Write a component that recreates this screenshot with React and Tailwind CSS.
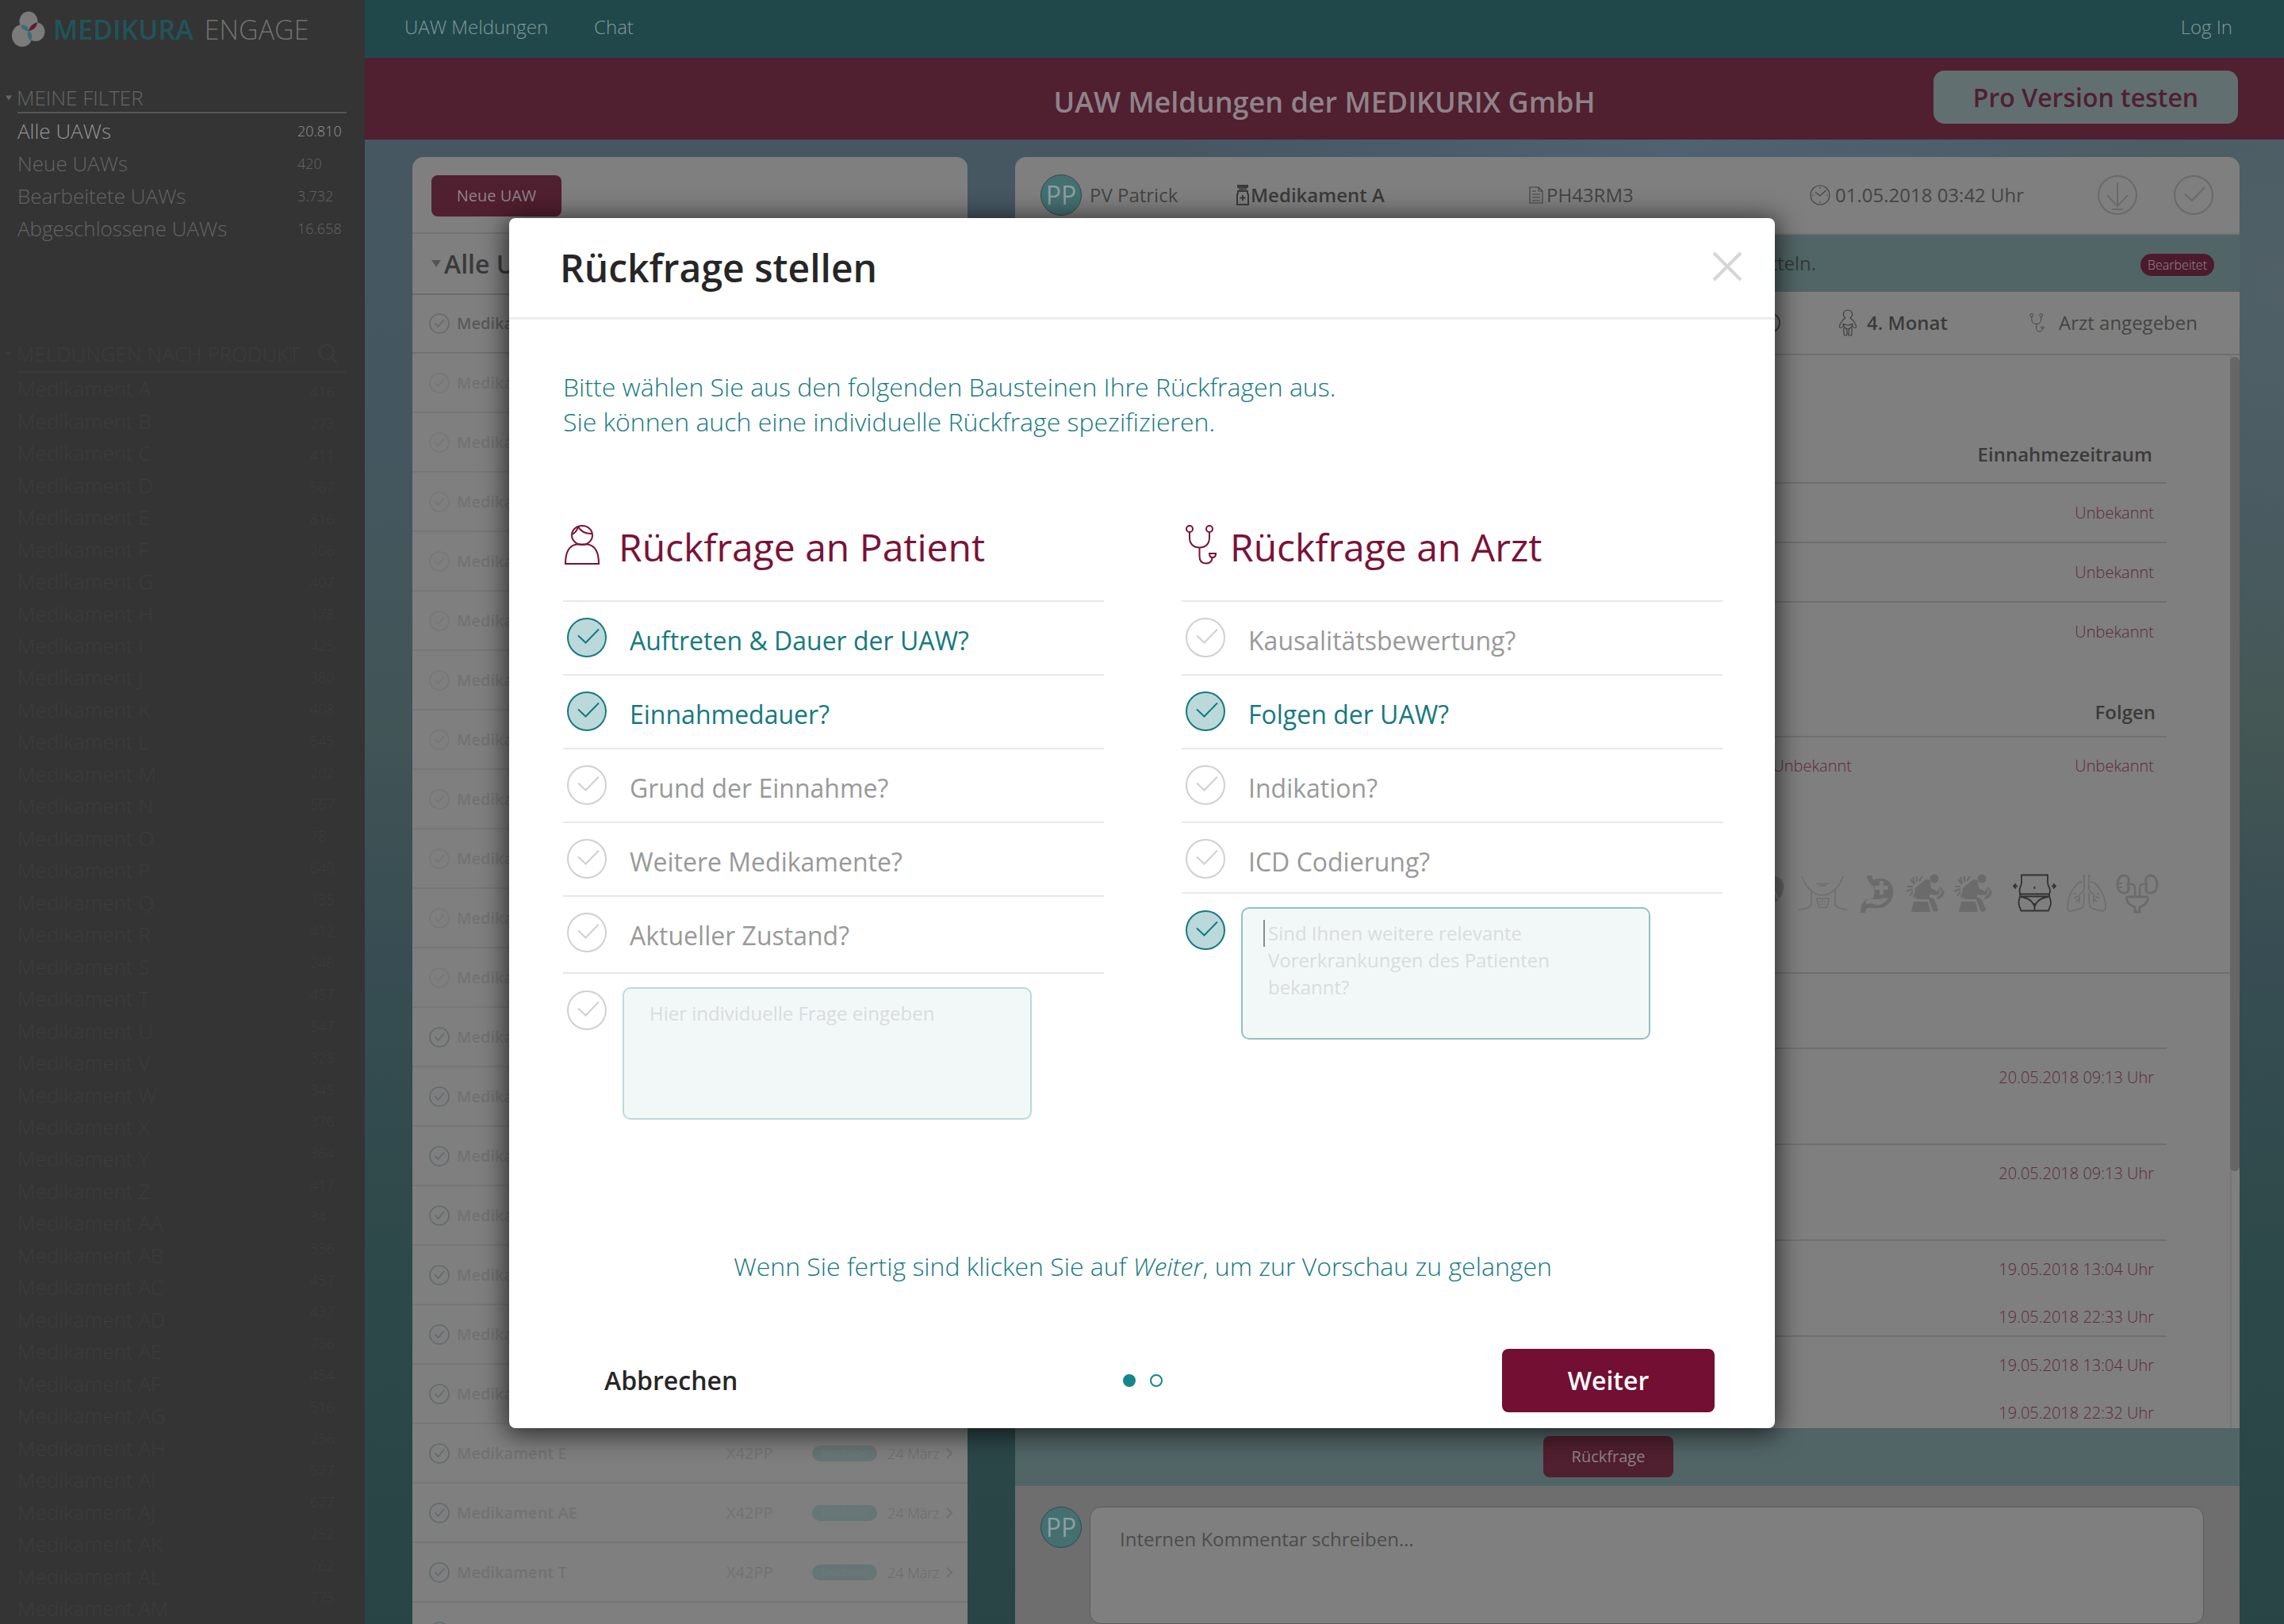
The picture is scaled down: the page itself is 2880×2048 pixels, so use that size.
import React from "react";

const filters = [
  ["Alle UAWs", "20.810", true],
  ["Neue UAWs", "420"],
  ["Bearbeitete UAWs", "3.732"],
  ["Abgeschlossene UAWs", "16.658"],
];

const products = [
  ..."ABCDEFGHIJKLMNOPQRSTUVWXYZ".split(""),
  ..."ABCDEFGHIJKLM".split("").map((c) => "A" + c),
];

const productCounts = [
  416, 273, 411, 567, 816, 206, 407, 178, 425, 380, 408, 545, 202, 567, 78, 640, 135, 412, 246, 457,
  547, 328, 345, 376, 364, 417, 34, 336, 457, 437, 756, 454, 516, 256, 577, 677, 252, 762, 775, 675,
];

const reports = [
  "A", "B", "C", "D", "F", "G", "H", "I", "J", "K", "L", "M",
  "N", "O", "P", "Q", "R", "S", "E", "AE", "T", "AF",
].map((name, i) => ({ name, done: i > 10 }));

const timeline = [
  ["20.05.2018 09:13 Uhr"],
  ["20.05.2018 09:13 Uhr"],
  ["19.05.2018 13:04 Uhr", "19.05.2018 22:33 Uhr"],
  ["19.05.2018 13:04 Uhr", "19.05.2018 22:32 Uhr"],
];

const CheckMark = ({ className }) => (
  <svg viewBox="0 0 50 50" fill="none" stroke="currentColor" strokeWidth="2" className={className} aria-hidden="true">
    <path d="M14 22.5 23.5 31.5 40 14.5" />
  </svg>
);

const CheckCircle = ({ className }) => (
  <svg viewBox="0 0 26 26" fill="none" stroke="currentColor" strokeWidth="1.6" className={className} aria-hidden="true">
    <circle cx="13" cy="13" r="12" />
    <path d="M7.500 12.500 11.500 17 19 8" />
  </svg>
);

const Triangle = ({ className }) => (
  <svg viewBox="0 0 12 9" fill="currentColor" className={className} aria-hidden="true">
    <path d="M0 0h12L6 9z" />
  </svg>
);

const Logo = () => (
  <svg viewBox="0 0 44 46" className="h-[46px] w-11" aria-hidden="true">
    <ellipse cx="23" cy="13" rx="11.500" ry="12.500" fill="#7b7b7b" />
    <ellipse cx="32" cy="26" rx="11.500" ry="12" fill="#7b7b7b" />
    <ellipse cx="15" cy="31" rx="13" ry="14" fill="#7b7b7b" />
    <path d="M23 25c1-4 4-9 11-11 0 5-4 10-11 11z" fill="#5d1b36" />
    <path d="M13 18c4-2 10 1 10 7-5 0-9-3-10-7z" fill="#3c6d70" />
    <path d="M22 24c6 3 6 8 4 14-4-3-5-9-4-14z" fill="#3c6d70" />
  </svg>
);

const Stethoscope = ({ className }) => (
  <svg viewBox="0 0 40 50" fill="none" stroke="currentColor" strokeWidth="2" className={className} aria-hidden="true">
    <circle cx="6" cy="5" r="4" />
    <circle cx="31" cy="5" r="4" />
    <path d="M6 9v7c0 8 5 12.500 12.500 12.500S31 24 31 16V9" />
    <path d="M18.500 28.500V39c0 6 3 9.500 8 9.500s8-3 8-8" />
    <path d="M31 36h8c0 3-1.500 5-4 5s-4-2-4-5z" />
  </svg>
);

const Patient = ({ className }) => (
  <svg viewBox="0 0 44 50" fill="none" stroke="currentColor" strokeWidth="2" className={className} aria-hidden="true">
    <ellipse cx="22" cy="13" rx="13" ry="12" />
    <path d="M1 49c0-14 4-23 14-24.500h14C39 26 43 35 43 49z" />
    <path d="M17 2c-1 4-3 8-8 10M17 2c3 6 9 9 17 9" />
  </svg>
);

const MedicineBottle = () => (
  <svg viewBox="0 0 16 26" className="h-[26px] w-4" aria-hidden="true">
    <path d="M1 0h14v4H1z" fill="#3a3a3a" />
    <path d="M3 5.500h10M2 8h12v3l1 1v13H1V12l1-1z" fill="none" stroke="#3a3a3a" strokeWidth="2" />
    <path d="M8 13v7M4.500 16.500h7" stroke="#3a3a3a" strokeWidth="2" />
  </svg>
);

const Document = () => (
  <svg viewBox="0 0 18 22" fill="none" stroke="currentColor" strokeWidth="1.200" className="h-[22px] w-[18px] text-[#444]" aria-hidden="true">
    <path d="M1 1h11l5 5v15H1zM12 1v5h5M4 6h5M4 10h10M4 14h10M4 18h10" />
  </svg>
);

const Clock = () => (
  <svg viewBox="0 0 26 26" fill="none" stroke="currentColor" strokeWidth="1.200" className="size-[26px] text-[#444]" aria-hidden="true">
    <circle cx="13" cy="13" r="12" />
    <path d="M7 9.500 13 14l7.500-7M13 3v2M13 21v2M3 13h2M21 13h2" />
  </svg>
);

const Baby = () => (
  <svg viewBox="0 0 24 34" fill="none" stroke="currentColor" strokeWidth="1.200" className="h-[34px] w-6 text-[#3f3f3f]" aria-hidden="true">
    <path d="M9 11C4 7 7 1 12 1s8 6 3 10" />
    <path d="M9 11C6 13 1.500 18 1.500 22c0 2 3 2 4 0l2-3M15 11c3 2 7.500 7 7.500 11 0 2-3 2-4 0l-2-3" />
    <path d="M6 18.500q6 3 12 0c0 3-4 6.500-6 6.500s-6-3.500-6-6.500z" />
    <path d="M7.500 23c-2 4 0 6 0 10h3c1-3 1-6-1-9M16.500 23c2 4 0 6 0 10h-3c-1-3-1-6 1-9" />
  </svg>
);

const Neck = () => (
  <svg viewBox="0 0 66 52" fill="none" stroke="#6e6e6e" strokeWidth="1.600" className="h-[52px] w-[66px]" aria-hidden="true">
    <path d="M6 4c4 13 15 24 26 24S54 17 58 4" />
    <path d="M18 21v17c0 5-6 7-16 8.500M48 21v17c0 5 6 7 15.500 8.500M24 13.500h6l2 .8 2-.8h6M28 16h8" />
    <path d="M25 32h5l2 1 2-1h6c0 4-1 8-3 11.500H28C26 40 25 36 25 32z" />
    <path d="M29 35v6M32 35v6M35 35v6" strokeDasharray="2 1.500" />
  </svg>
);

const Stomach = () => (
  <svg viewBox="0 0 46 52" className="h-[52px] w-[46px]" aria-hidden="true">
    <path d="M13 3c0 7 6 8 6 13" fill="none" stroke="#6b6b6b" strokeWidth="6" />
    <path d="M16 11C21 5 34 5 40 13c5 8 4 20-3 26-5 5-13 6-19 5-7-1-10 0-10 6H2c0-9 3-14 8-17 6 0 8-1 9-5 1-6 0-10-3-17z" fill="#6b6b6b" />
    <path d="M10 34c5-2 9-1 14-1s9-3 13-1c-5 7-11 9-16 8-4-2-8-2-11-1-2 0-2-3 0-5z" fill="#7f7f7f" />
    <path d="M28.500 10v17M20 18.500h17" stroke="#7f7f7f" strokeWidth="5" />
  </svg>
);

const BackPain = () => (
  <svg viewBox="0 0 52 52" className="h-[52px] w-[52px]" fill="#6b6b6b" aria-hidden="true">
    <circle cx="37" cy="7" r="5.500" />
    <path d="M13 19 25 9c3-2 7-1 7 2l1 8 8 4c3 1 2 5-1 5l-9-1v4c4 0 6 2 7 5l4 10c0 3-6 4-7 1l-5-14H18c-4 0-6-2-6-5z" />
    <path d="M11 36h18l3 13H8z" />
    <path d="M12 14 7 8M12 13l-2-8M15 11V4M18 10l4-6M10 17H3M10 20l-8 3M10 23l-4 6M12 26l-1 5" stroke="#6b6b6b" strokeWidth="2" fill="none" />
    <path d="M44 18c4 3 4 9-2 12M42 20c2 3 2 5-1 7M40 32c6 0 9-5 9-10" stroke="#6b6b6b" strokeWidth="1.800" fill="none" />
  </svg>
);

const Waist = () => (
  <svg viewBox="0 0 56 52" fill="none" stroke="#323232" strokeWidth="1.800" className="h-[52px] w-14" aria-hidden="true">
    <path d="M11 2.500h33v9c0 5 3 7 3 11 0 2-1 3-1 5 0 3 2 6 2 10s-2 7-3 10H10.500C9 44 7.500 41 7.500 37s2-7 2-10c0-2-1-3-1-5 0-4 2.500-6 2.500-10z" />
    <path d="M8 26.500h39M9 29.500h37M9.500 30c9 1 16 5 18 13 2-8 9-12 18-13M27.500 38v9.500" />
    <path d="M27.500 17v3" />
    <path d="M6 16.500H1M4 13.500l-3 3 3 3M49 16.500h5M51 13.500l3 3-3 3" />
  </svg>
);

const Lungs = () => (
  <svg viewBox="0 0 50 52" fill="none" stroke="#6c6c6c" strokeWidth="1.500" className="h-[52px] w-[50px]" aria-hidden="true">
    <path d="M22 2v17c0 4-3 6-6 8M28 2v17c0 4 3 6 6 8M20 3l3 2M30 3l-3 2" />
    <path d="M20 11C12 11 1 27 1 43c0 3 1 5 4 5 6-2 13-2 15-5 2-2 2-12 2-18M30 11c8 0 19 16 19 32 0 3-1 5-4 5-6-2-13-2-15-5-2-2-2-12-2-18" />
    <path d="M16 27c-1 4 1 6 0 11M14 29l-5 3M16 32l-4 4M34 27c1 4-1 6 0 11M36 29l5 3M34 32l4 4M12 26h-3M38 26h3" />
  </svg>
);

const Kidneys = () => (
  <svg viewBox="0 0 54 52" fill="none" stroke="#6b6b6b" strokeWidth="3" className="h-[52px] w-[54px]" aria-hidden="true">
    <path d="M10 3c5 0 7 4 6 8-1 3-1 5 0 8 1 4-3 7-7 6C4 24 2 19 2 14S5 3 10 3zM44 3c-5 0-7 4-6 8 1 3 1 5 0 8-1 4 3 7 7 6 5-1 7-6 7-11S49 3 44 3z" />
    <path d="M17 14h3c3 0 4 2 4 5v11M37 14h-3c-3 0-4 2-4 5v11" strokeWidth="2.500" />
    <path d="M15 30h24c2 0 2 3 0 6-2 4-6 6-9 7v6h-6v-6c-3-1-7-3-9-7-2-3-2-6 0-6z" />
    <path d="M3 13h5M3 18h5" strokeWidth="2" />
  </svg>
);

const HeadIcon = () => (
  <svg viewBox="0 0 40 52" className="h-[52px] w-10" aria-hidden="true">
    <path d="M6 4h20c9 0 14 7 13 15-1 9-7 17-14 20H6z" fill="#666" />
    <path d="M24 33l4-9 4 9" fill="none" stroke="#7f7f7f" strokeWidth="2" />
  </svg>
);

function Sidebar() {
  return (
    <aside className="flex h-full w-[460px] shrink-0 flex-col bg-[#343434] pl-[22px] pr-[23px]">
      <div className="-ml-[9px] flex h-[78px] items-center gap-[10px] pb-1">
        <Logo />
        <div className="flex gap-[14px] text-[34px] leading-[44px]">
          <span className="font-semibold text-[#20545a]">MEDIKURA</span>
          <span className="font-light text-[#717171]">ENGAGE</span>
        </div>
      </div>
      <section className="mt-[27px]">
        <h2 className="-ml-[15px] flex h-9 items-center gap-[6px] text-[26px] font-light text-[#666]">
          <Triangle className="h-[7px] w-2" />
          MEINE FILTER
        </h2>
        <div className="h-[2px] bg-[#575757]" />
        <ul className="pt-[2px]">
          {filters.map(([name, count, active]) => (
            <li key={name}>
              <a
                href="#"
                className={`flex h-[41px] items-center justify-between text-[26px] font-light ${active ? "text-[#949494]" : "text-[#646464]"}`}
              >
                <span>{name}</span>
                <span className="w-[62px] text-[18px]">{count}</span>
              </a>
            </li>
          ))}
        </ul>
      </section>
      <section className="mt-[119px] flex min-h-0 flex-1 flex-col text-[#3c3c3c]">
        <div className="flex h-9 items-center justify-between pr-[10px]">
          <h2 className="-ml-[15px] flex items-center gap-[6px] text-[26px] font-light">
            <Triangle className="h-[7px] w-2" />
            MELDUNGEN NACH PRODUKT
          </h2>
          <button type="button" aria-label="Suchen">
            <svg viewBox="0 0 26 26" fill="none" stroke="currentColor" strokeWidth="2" className="size-[26px]">
              <circle cx="11" cy="11" r="9" />
              <path d="M17 18l7 7" />
            </svg>
          </button>
        </div>
        <div className="mt-1 h-[2px] bg-[#3a3a3a]" />
        <div className="flex min-h-0 flex-1 justify-between overflow-hidden">
          <ul className="flex flex-col">
            {products.map((p) => (
              <li key={p} className="flex min-h-0 flex-1 items-center text-[26px] font-light leading-8">
                Medikament {p}
              </li>
            ))}
          </ul>
          <ul className="w-[46px] pt-1">
            {productCounts.map((n, i) => (
              <li key={i} className="flex h-10 items-center text-[18px] font-light">
                {n}
              </li>
            ))}
          </ul>
        </div>
      </section>
    </aside>
  );
}

function ReportList() {
  return (
    <section className="w-[700px] shrink-0 overflow-hidden rounded-t-[14px] bg-[#7f7f7f]">
      <div className="h-[97px] border-b-2 border-[#737373] px-6 pt-[23px]">
        <button type="button" className="h-[52px] w-[164px] rounded-lg bg-[#501f30] text-xl text-[#8e8388]">
          Neue UAW
        </button>
      </div>
      <h2 className="flex h-[77px] items-center gap-1 border-b-2 border-[#6c6c6c] px-6 text-[32px] font-semibold leading-[44px] text-[#3a3a3a]">
        <Triangle className="h-[9px] w-3 text-[#555]" />
        Alle UAWs
      </h2>
      <div className="flex h-[74px] items-center gap-[9px] border-b-2 border-[#707070] pl-[21px] text-xl font-semibold text-[#595959]">
        <CheckCircle className="size-[26px] text-[#696969]" />
        Medikament
      </div>
      <ul>
        {reports.map((r) => (
          <li key={r.name} className="flex h-[75px] items-center border-b-2 border-[#777] pl-[21px] text-xl text-[#727272]">
            <CheckCircle className={`size-[26px] ${r.done ? "text-[#5f6b6c]" : "text-[#777]"}`} />
            <span className="ml-[9px] w-[340px] font-semibold">Medikament {r.name}</span>
            <span className="w-[108px]">X42PP</span>
            <span className="h-5 w-[82px] rounded-[10px] bg-[#667576] text-center text-xs leading-5 text-[#6e7a7b]">
              Bearbeitet
            </span>
            <span className="ml-[13px] w-[73px] text-lg font-light text-[#6c6c6c]">24 März</span>
            <svg viewBox="0 0 10 14" fill="none" stroke="#6f6f6f" strokeWidth="2" className="h-[14px] w-[10px]" aria-hidden="true">
              <path d="M2 1l6 6-6 6" />
            </svg>
          </li>
        ))}
      </ul>
    </section>
  );
}

const cellLine = "border-[#6f6f6f]";

function ReportDetail() {
  return (
    <section className="flex min-w-0 flex-1 flex-col overflow-hidden rounded-t-[14px] bg-[#7f7f7f] text-2xl text-[#444]">
      <div className="grid h-[98px] shrink-0 grid-cols-[247fr_369fr_354fr_363fr_179fr] items-center border-b-2 border-[#757575] pl-8">
        <div className="flex items-center gap-[10px]">
          <span className="flex size-[52px] items-center justify-center rounded-full border border-[#33484a] bg-[#447072] text-[32px] text-[#8f9f9f]">PP</span>
          PV Patrick
        </div>
        <div className="flex items-center gap-[2px] font-semibold text-[#3a3a3a]">
          <MedicineBottle />
          Medikament A
        </div>
        <div className="flex items-center gap-1">
          <Document />
          PH43RM3
        </div>
        <div className="flex items-center gap-[6px]">
          <Clock />
          01.05.2018 03:42 Uhr
        </div>
        <div className="flex gap-[46px] text-[#6a6a6a]">
          <button type="button" aria-label="Herunterladen">
            <svg viewBox="0 0 50 50" fill="none" stroke="currentColor" strokeWidth="2" className="size-[50px]">
              <circle cx="25" cy="25" r="24" />
              <path d="M25 9v30M12 25l13 14 13-14M18 43h14" />
            </svg>
          </button>
          <button type="button" aria-label="Abschließen">
            <svg viewBox="0 0 50 50" fill="none" stroke="currentColor" strokeWidth="2" className="size-[50px]">
              <circle cx="25" cy="25" r="24" />
              <path d="M14 24l9 8 16-17" />
            </svg>
          </button>
        </div>
      </div>
      <div className="flex h-[72px] shrink-0 items-center justify-end bg-[#526566] pr-8 text-[#343a3b]">
        <span className="mr-[409px]">ermitteln.</span>
        <span className="mt-1 rounded-full bg-[#4b1b2d] px-[9px] text-base font-light leading-7 text-[#948a8e]">Bearbeitet</span>
      </div>
      <div className="flex h-20 shrink-0 items-center justify-end border-b-2 border-[#6f6f6f] pr-[53px]">
        <span className="size-[26px] rounded-full border-2 border-[#3f3f3f]" />
        <span className="ml-[73px] flex items-center gap-3 font-semibold text-[#3a3a3a]">
          <Baby />
          4. Monat
        </span>
        <span className="ml-[103px] flex items-center gap-[18px]">
          <Stethoscope className="h-6 w-[19px]" />
          Arzt angegeben
        </span>
      </div>
      <div className="flex min-h-0 flex-1">
        <div className="min-w-0 flex-1 overflow-hidden pt-[90px]">
          <table className="ml-8 w-[calc(100%-112px)] text-right">
            <thead>
              <tr className={`h-[71px] border-b-2 ${cellLine}`}>
                <th className="pr-[18px] font-semibold text-[#3a3a3a]">Einnahmezeitraum</th>
              </tr>
            </thead>
            <tbody className="text-xl font-light text-[#5a2c3c]">
              <tr className={`h-[75px] border-b-2 ${cellLine}`}><td className="pr-4">Unbekannt</td></tr>
              <tr className={`h-[75px] border-b-2 ${cellLine}`}><td className="pr-4">Unbekannt</td></tr>
              <tr className="h-[75px]"><td className="pr-4">Unbekannt</td></tr>
            </tbody>
          </table>
          <table className="ml-8 mt-[33px] w-[calc(100%-112px)] text-right">
            <thead>
              <tr className={`h-[62px] border-b-2 ${cellLine}`}>
                <td />
                <th className="w-[381px] pr-[14px] font-semibold text-[#3a3a3a]">Folgen</th>
              </tr>
            </thead>
            <tbody className="text-xl font-light text-[#5a2c3c]">
              <tr className="h-[72px]">
                <td className="pr-4">Unbekannt</td>
                <td className="pr-4">Unbekannt</td>
              </tr>
            </tbody>
          </table>
          <div className="mt-[100px] flex justify-end gap-3 pr-[90px]">
            <HeadIcon />
            <span className="ml-1"><Neck /></span>
            <Stomach />
            <BackPain />
            <span className="-ml-1"><BackPain /></span>
            <span className="ml-3"><Waist /></span>
            <Lungs />
            <Kidneys />
          </div>
          <div className="mt-[73px] h-[2px] bg-[#6f6f6f]" />
          <ol className="ml-8 mr-20 mt-[93px] text-xl font-light text-[#5a2c3c]">
            {timeline.map((stamps, i) => (
              <li key={i} className={`flex h-[121px] justify-between border-t-2 pr-4 pt-[18px] ${cellLine}`}>
                <span className="flex-1 pr-[467px] text-right font-semibold leading-9 text-[#4a4a4a]">
                  {i === 0 ? "Weitere Medikamente?" : ""}
                </span>
                <span className="flex flex-col gap-6 leading-9">
                  {stamps.map((s) => (
                    <time key={s}>{s}</time>
                  ))}
                </span>
              </li>
            ))}
          </ol>
        </div>
        <div className="w-3 border-l-2 border-[#767676] pt-[2px]">
          <div className="-ml-[2px] h-[76%] w-3 rounded-md bg-[#666]" />
        </div>
      </div>
      <div className="flex h-[73px] shrink-0 items-center justify-center bg-[#526566] pb-[2px] pr-12">
        <button type="button" className="h-[52px] w-[164px] rounded-lg bg-[#501f30] text-xl text-[#8e8388]">
          Rückfrage
        </button>
      </div>
      <div className="flex h-[174px] shrink-0 gap-[10px] bg-[#6e6e6e] pl-8 pr-[45px] pt-[26px]">
        <span className="flex size-[52px] shrink-0 items-center justify-center rounded-full border border-[#33484a] bg-[#447072] text-[32px] text-[#8f9f9f]">PP</span>
        <textarea
          aria-label="Interner Kommentar"
          placeholder="Internen Kommentar schreiben…"
          className="h-[148px] flex-1 resize-none rounded-[14px] border border-[#5b5b5b] bg-[#7f7f7f] px-[37px] py-6 text-2xl placeholder:text-[#4c4c4c]"
        />
      </div>
    </section>
  );
}

function CheckBox({ id, checked, label }) {
  return (
    <span className="grid size-[50px] shrink-0">
      <input
        id={id}
        type="checkbox"
        aria-label={label}
        defaultChecked={checked}
        className="peer col-start-1 row-start-1 size-[50px] appearance-none rounded-full border-2 border-[#d0d0d0] checked:border-[#16797f] checked:bg-[#bbd9db]"
      />
      <CheckMark className="pointer-events-none col-start-1 row-start-1 size-[50px] text-[#d0d0d0] peer-checked:text-[#16797f]" />
    </span>
  );
}

function QuestionColumn({ id, icon, title, questions, lastRow, custom }) {
  return (
    <fieldset className="min-w-0">
      <legend className="flex h-16 items-center text-5xl leading-[64px] text-[#7a1238]">
        <span className="pb-[6px]">{icon}</span>
        {title}
      </legend>
      <ul className="mt-[35px] border-t-2 border-[#e8e8e8]">
        {questions.map(([text, checked], i) => (
          <li
            key={text}
            className={`flex items-start gap-[29px] border-b-2 border-[#e8e8e8] pl-[5px] pt-5 ${i === questions.length - 1 ? lastRow : "h-[93px]"}`}
          >
            <CheckBox id={`${id}-${i}`} checked={checked} />
            <label htmlFor={`${id}-${i}`} className={`pt-[7px] text-[32px] leading-[44px] ${checked ? "text-[#16797f]" : "text-[#999]"}`}>
              {text}
            </label>
          </li>
        ))}
      </ul>
      <div className="mt-[17px] flex items-start gap-5 pl-[5px]">
        <span className="pt-1">
          <CheckBox id={`${id}-custom`} checked={custom.active} label="Individuelle Frage" />
        </span>
        <div className="relative">
          <textarea
            aria-label="Individuelle Frage eingeben"
            placeholder={custom.placeholder}
            className={`block h-[167px] w-[516px] resize-none rounded-[10px] border-2 bg-[#f2f8f8] px-8 py-[14px] text-2xl leading-[34px] placeholder:text-[#d9dcdc] ${custom.active ? "border-[#93c1c4]" : "border-[#bbd9db]"}`}
          />
          {custom.active && <span className="absolute left-7 top-4 h-[34px] w-[2px] bg-[#8a8d8d]" />}
        </div>
      </div>
    </fieldset>
  );
}

function FollowUpDialog() {
  return (
    <div className="absolute inset-0 flex items-start justify-center pt-[275px]">
      <div
        role="dialog"
        aria-modal="true"
        aria-labelledby="dialog-title"
        className="w-[1596px] max-w-full rounded-lg bg-white shadow-[0_4px_32px_4px_rgba(0,0,0,0.65)]"
      >
        <header className="flex h-32 items-center justify-between border-b-[3px] border-[#ededed] pl-[64px] pr-[41px]">
          <h1 id="dialog-title" className="text-5xl font-semibold leading-[64px] text-[#262626]">Rückfrage stellen</h1>
          <button type="button" aria-label="Schließen" className="pb-1">
            <svg viewBox="0 0 38 38" fill="none" stroke="#d6d6d6" strokeWidth="4" className="size-[38px]">
              <path d="M2 2l34 34M36 2 2 36" />
            </svg>
          </button>
        </header>
        <div className="pl-[68px] pr-[66px]">
          <p className="mt-[63px] text-[32px] font-light leading-[44px] text-[#16797f]">
            Bitte wählen Sie aus den folgenden Bausteinen Ihre Rückfragen aus.
            <br />
            Sie können auch eine individuelle Rückfrage spezifizieren.
          </p>
          <div className="mt-[104px] grid grid-cols-2 gap-[98px]">
            <QuestionColumn
              id="patient"
              icon={<Patient className="ml-[2px] mr-6 h-[50px] w-11" />}
              title="Rückfrage an Patient"
              questions={[
                ["Auftreten & Dauer der UAW?", true],
                ["Einnahmedauer?", true],
                ["Grund der Einnahme?", false],
                ["Weitere Medikamente?", false],
                ["Aktueller Zustand?", false],
              ]}
              lastRow="h-[97px]"
              custom={{ placeholder: "Hier individuelle Frage eingeben" }}
            />
            <QuestionColumn
              id="arzt"
              icon={<Stethoscope className="ml-1 mr-[17px] h-[50px] w-10" />}
              title="Rückfrage an Arzt"
              questions={[
                ["Kausalitätsbewertung?", false],
                ["Folgen der UAW?", true],
                ["Indikation?", false],
                ["ICD Codierung?", false],
              ]}
              lastRow="h-[89px]"
              custom={{ active: true, placeholder: "Sind Ihnen weitere relevante Vorerkrankungen des Patienten bekannt?" }}
            />
          </div>
          <p className="mt-[163px] text-center text-[32px] font-light leading-[44px] text-[#16797f]">
            Wenn Sie fertig sind klicken Sie auf <em>Weiter</em>, um zur Vorschau zu gelangen
          </p>
          <footer className="mt-[82px] grid grid-cols-[1fr_auto_1fr] items-center pb-5 text-[32px] font-semibold">
            <button type="button" className="justify-self-start pl-[52px] text-[#262626]">Abbrechen</button>
            <div className="flex gap-[18px]">
              <span className="size-4 rounded-full bg-[#16858c]" />
              <span className="size-4 rounded-full border-2 border-[#16858c]" />
            </div>
            <button type="button" className="mr-[10px] h-20 w-[268px] justify-self-end rounded-lg bg-[#720f33] text-white">Weiter</button>
          </footer>
        </div>
      </div>
    </div>
  );
}

export default function App() {
  return (
    <div className="relative flex h-screen overflow-hidden bg-[#343434] font-['Open_Sans','Noto_Sans',sans-serif]">
      <Sidebar />
      <div className="flex min-w-0 flex-1 flex-col">
        <nav className="flex h-[73px] shrink-0 items-center bg-[#20484b] pb-[5px] pl-[50px] pr-[65px] text-2xl font-light text-[#829a9b]">
          <a href="#">UAW Meldungen</a>
          <a href="#" className="ml-[58px]">Chat</a>
          <a href="#" className="ml-auto">Log In</a>
        </nav>
        <header className="grid h-[103px] shrink-0 grid-cols-[1fr_auto_1fr] items-center bg-[#501f30] pl-[58px] pr-[58px]">
          <span />
          <h1 className="pt-2 text-4xl font-semibold text-[#8e8388]">UAW Meldungen der MEDIKURIX GmbH</h1>
          <button type="button" className="mb-1 h-[67px] w-[384px] justify-self-end rounded-[14px] bg-[#626f70] text-[32px] font-semibold text-[#501f30]">
            Pro Version testen
          </button>
        </header>
        <main className="flex min-h-0 flex-1 gap-[60px] bg-[radial-gradient(circle_at_68%_0%,rgba(84,108,130,0.5),transparent_25%),radial-gradient(ellipse_at_100%_10%,rgba(84,100,104,0.7),transparent_25%),radial-gradient(ellipse_at_100%_38%,rgba(70,88,80,0.5),transparent_15%),linear-gradient(to_bottom,#465762_0%,#445760_20%,#415456_40%,#374d53_55%,#2e494a_75%,#294445_100%)] pl-[60px] pr-14 pt-[22px]">
          <ReportList />
          <ReportDetail />
        </main>
      </div>
      <FollowUpDialog />
    </div>
  );
}
